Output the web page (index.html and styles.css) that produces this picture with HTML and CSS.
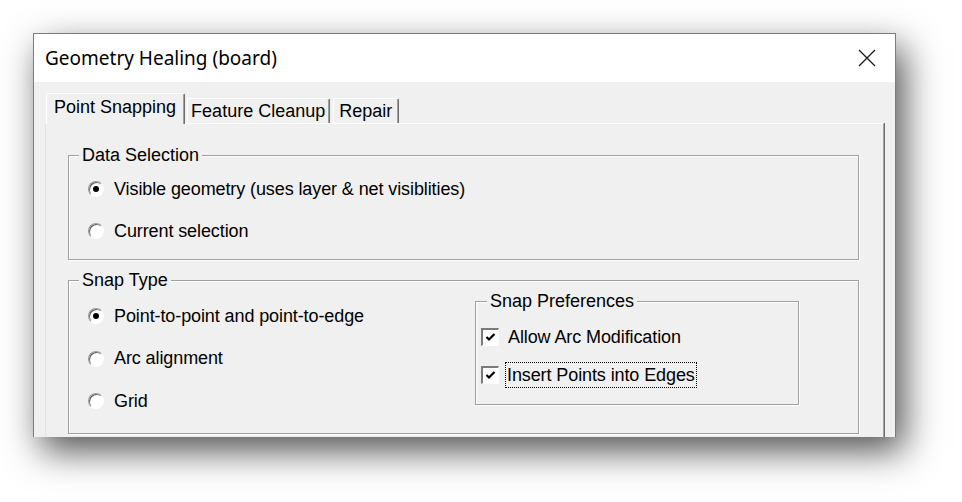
FILE: index.html
```html
<!DOCTYPE html>
<html>
<head>
<meta charset="utf-8">
<link rel="stylesheet" href="styles.css">
</head>
<body>
<div class="stage">
  <div class="dialog">
    <div class="titlebar">
      <span class="title">Geometry Healing (board)</span>
      <svg class="close" width="18" height="18" viewBox="0 0 18 18"><path d="M1 1 L17 17 M17 1 L1 17" stroke="#1a1a1a" stroke-width="1.3" fill="none"/></svg>
    </div>
    <div class="body">
      <div class="tabs">
        <div class="tab active">Point Snapping</div>
        <div class="tab">Feature Cleanup</div>
        <div class="tab repair">Repair</div>
      </div>
      <div class="panel">
        <fieldset class="group data">
          <legend>Data Selection</legend>
          <div class="options">
            <div class="opt"><span class="radio checked"></span><span>Visible geometry (uses layer &amp; net visiblities)</span></div>
            <div class="opt"><span class="radio"></span><span>Current selection</span></div>
          </div>
        </fieldset>
        <fieldset class="group snap">
          <legend>Snap Type</legend>
          <div class="snap-row">
            <div class="options snap-options">
              <div class="opt"><span class="radio checked"></span><span>Point-to-point and point-to-edge</span></div>
              <div class="opt"><span class="radio"></span><span>Arc alignment</span></div>
              <div class="opt"><span class="radio"></span><span>Grid</span></div>
            </div>
            <fieldset class="group prefs">
              <legend>Snap Preferences</legend>
              <div class="checks">
                <div class="opt chk"><span class="checkbox"><svg width="13" height="13" viewBox="0 0 13 13"><path d="M2.5 6 L5 8.5 L10.5 3" stroke="#000" stroke-width="2.2" fill="none"/></svg></span><span>Allow Arc Modification</span></div>
                <div class="opt chk"><span class="checkbox"><svg width="13" height="13" viewBox="0 0 13 13"><path d="M2.5 6 L5 8.5 L10.5 3" stroke="#000" stroke-width="2.2" fill="none"/></svg></span><span class="focus">Insert Points into Edges</span></div>
              </div>
            </fieldset>
          </div>
        </fieldset>
      </div>
    </div>
  </div>
</div>
</body>
</html>
```

FILE: styles.css
```css
html, body {
  margin: 0;
  padding: 0;
  background: #ffffff;
  overflow: hidden;
}
body {
  width: 962px;
  height: 502px;
  font-family: "Liberation Sans", Arial, sans-serif;
  color: #000;
}
.stage {
  padding: 33px 0 0 33px;
}
.dialog {
  width: 861px;
  height: 403px;
  border: 1px solid #7c7c7c;
  border-bottom: none;
  background: #f0f0f0;
  box-shadow: 8px 14px 34px rgba(0, 0, 0, 0.68);
  overflow: hidden;
  display: flex;
  flex-direction: column;
}
.titlebar {
  height: 48px;
  background: #ffffff;
  display: flex;
  align-items: center;
  justify-content: space-between;
  padding: 0 19px 0 11px;
  flex: none;
}
.title {
  font-family: "Noto Sans", "Open Sans", sans-serif;
  font-size: 19px;
  color: #000;
}
.close {
  display: block;
}
.body {
  padding: 11px 10px 0 11px;
  flex: 1;
}
.tabs {
  display: flex;
  align-items: flex-end;
  height: 30px;
  padding-left: 1px;
}
.tab {
  height: 25px;
  box-sizing: border-box;
  padding: 0 4px 0 3px;
  border-top: 1px solid #ffffff;
  border-left: 1px solid #ffffff;
  border-right: 1px solid #6d6d6d;
  box-shadow: inset -1px 0 0 #a0a0a0;
  border-radius: 2px 2px 0 0;
  font-size: 18px;
  line-height: 24px;
  margin-left: 2px;
}
.tab.repair {
  margin-left: 3px;
  padding: 0 6px 0 5px;
}
.tab.active {
  height: 31px;
  margin-left: 0;
  margin-bottom: -1px;
  padding: 0 8px 0 7px;
  line-height: 26px;
  background: #f0f0f0;
  position: relative;
  z-index: 1;
}
.panel {
  height: 360px;
  border-top: 1px solid #ffffff;
  border-left: 1px solid #e3e3e3;
  border-right: 1px solid #a0a0a0;
  box-shadow: 1px 0 0 #6d6d6d;
  padding: 22px 24px 0 22px;
  box-sizing: border-box;
  width: 839px;
}
.group {
  margin: 0;
  padding: 0;
  min-width: 0;
  border: 1px solid #a0a0a0;
  box-shadow: inset 1px 1px 0 #ffffff, 1px 1px 0 #ffffff;
  font-size: 18px;
}
.group legend {
  margin-left: 10px;
  padding: 0 3px;
  line-height: 18px;
  font-size: 18px;
  background: #f0f0f0;
}
.options {
  display: flex;
  flex-direction: column;
  gap: 22px;
  padding: 15px 0 18px 19px;
}
.snap {
  margin-top: 11px;
}
.snap-row {
  display: flex;
  align-items: flex-start;
}
.snap-options {
  width: 406px;
  flex: none;
  box-sizing: border-box;
  gap: 22.5px;
  padding: 17px 0 22px 19px;
}
.opt {
  display: flex;
  align-items: center;
  height: 20px;
  gap: 10px;
  font-size: 18px;
  letter-spacing: -0.1px;
  white-space: nowrap;
}
.radio {
  width: 16px;
  height: 16px;
  box-sizing: border-box;
  border-radius: 50%;
  border: 1px solid;
  border-color: #9a9a9a #ffffff #ffffff #9a9a9a;
  box-shadow: inset 1px 1px 0 #5f5f5f;
  background: #ffffff;
  display: grid;
  place-items: center;
  flex: none;
}
.radio.checked::after {
  content: "";
  width: 6px;
  height: 6px;
  border-radius: 50%;
  background: #000;
}
.prefs {
  width: 324px;
  box-sizing: border-box;
  margin-top: 3px;
}
.prefs legend {
  margin-left: 11px;
}
.checks {
  display: flex;
  flex-direction: column;
  gap: 18px;
  padding: 17px 0 19px 5px;
}
.chk {
  gap: 9px;
}
.checkbox {
  width: 18px;
  height: 18px;
  box-sizing: border-box;
  border-top: 2px solid #7a7a7a;
  border-left: 2px solid #7a7a7a;
  border-right: 1px solid #ffffff;
  border-bottom: 1px solid #ffffff;
  background: #ffffff;
  display: grid;
  place-items: center;
  flex: none;
}
.checkbox svg {
  display: block;
}
.focus {
  outline: 1px dotted #000;
  outline-offset: 0;
  padding: 1px 1px;
  margin-left: -2px;
  line-height: 22px;
}
```
